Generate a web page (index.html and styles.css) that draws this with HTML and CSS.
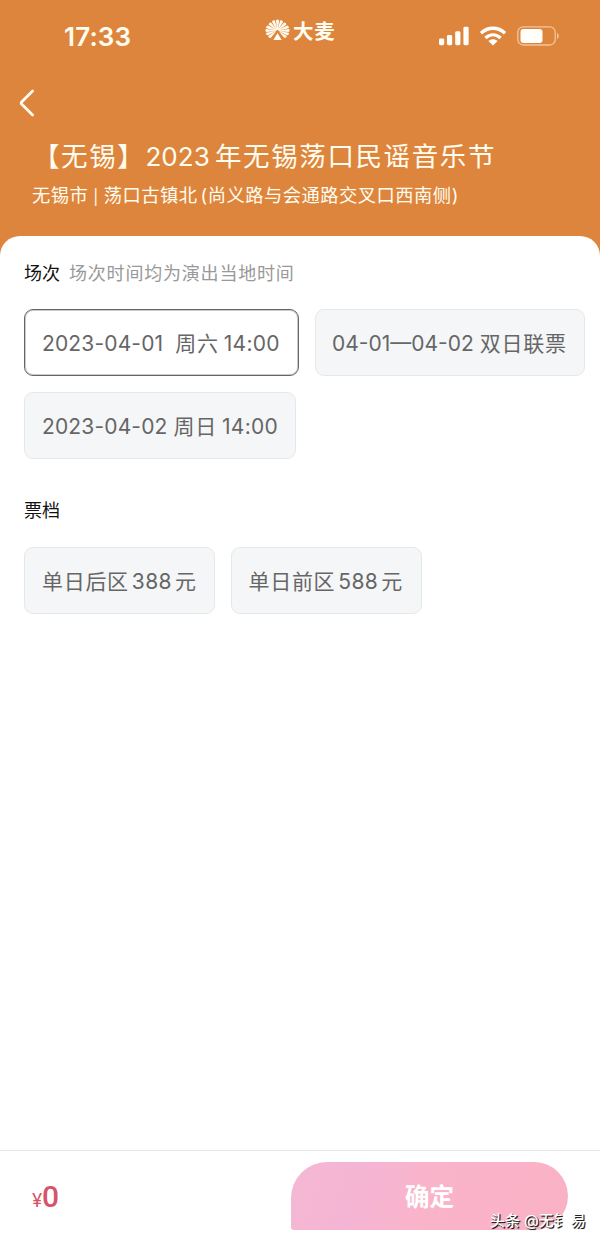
FILE: index.html
```html
<!DOCTYPE html>
<html lang="zh-CN">
<head>
<meta charset="utf-8">
<title>选择场次</title>
<link rel="stylesheet" href="styles.css">
</head>
<body>
<div class="page">
  <header class="hero">
    <div class="status">
      <span class="clock">17:33</span>
      <div class="brand">
        <svg class="flower" viewBox="0 0 26 24">
          <path fill="currentColor" d="M12.7 12 11.3 2.1Q13 .2 14.7 2.1L13.3 12zM12.3 12 7.2 3.5Q8.1 1.1 10.3 2.2L12.8 12zM13.7 12l5.1-8.5Q17.9 1.1 15.7 2.2L13.2 12zM12 12.3 3.8 6.5Q3.8 4 6.3 4.1L12.5 12zM14 12.3l8.2-5.8Q22.2 4 19.7 4.1L13.5 12zM11.8 12.6 1.4 10.2Q.5 8 3.1 7.3L12.2 12.3zM14.2 12.6l10.4-2.4Q25.5 8 22.9 7.3L13.8 12.3zM11.6 13 1.2 14Q-.4 12.2 1.2 11L11.8 12.5zM14.4 13l10.4 1Q26.4 12.2 24.8 11L14.2 12.5zM11.4 13.4 2.8 17.5Q.6 16.9 1.3 14.9L11.5 13zM14.6 13.4l8.6 4.1Q25.4 16.9 24.7 14.9L14.5 13zM10.8 14.3 5.9 20.4Q3.1 20.3 3.4 18.1L11.2 13.5zM15.2 14.3l4.9 6.1Q22.9 20.3 22.6 18.1L14.8 13.5zM13 15l4.3 7.3H8.7z"/>
        </svg>
        <span class="brand-name">大麦</span>
      </div>
      <div class="indicators">
        <svg class="signal" viewBox="0 0 32 20" fill="currentColor"><rect x="0" y="12.5" width="5.4" height="7" rx="1.5"/><rect x="8.2" y="9" width="5.4" height="10.5" rx="1.5"/><rect x="16.7" y="5" width="5.4" height="14.5" rx="1.5"/><rect x="25.2" y="0.5" width="5.4" height="19" rx="1.5"/></svg>
        <svg class="wifi" viewBox="0 0 28 20"><g fill="none" stroke="currentColor" stroke-width="3.4"><path d="M2 7.3C9 .6 19 .6 26 7.3"/><path d="M6.4 12c4.6-4.2 10.6-4.2 15.2 0"/></g><path fill="currentColor" d="M9.4 15c2.7-2.4 6.5-2.4 9.2 0L14 19.6z"/></svg>
        <svg class="battery" viewBox="0 0 43 20"><rect x=".8" y=".8" width="37.4" height="18.2" rx="5.5" fill="none" stroke="#f2c59d" stroke-width="1.3"/><rect x="3.5" y="3.1" width="22" height="13.8" rx="3" fill="currentColor"/><path d="M40 7c2.3.8 2.3 5 0 6z" fill="#f2c59d"/></svg>
      </div>
    </div>
    <svg class="back" viewBox="0 0 16 28"><path d="M13.6 2 2.6 13a1.5 1.5 0 0 0 0 2l11 11" fill="none" stroke="currentColor" stroke-width="2.7" stroke-linecap="round"/></svg>
    <h1 class="title">【无锡】<span class="year">2023</span>年无锡荡口民谣音乐节</h1>
    <p class="venue">无锡市<span class="bar">|</span>荡口古镇北<span class="paren">(</span>尚义路与会通路交叉口西南侧<span>)</span></p>
  </header>
  <main class="sheet">
    <div class="heading"><h2>场次</h2><span class="hint">场次时间均为演出当地时间</span></div>
    <div class="chips">
      <div class="chip selected"><span class="num">2023-04-01</span><span class="wide">周六</span><span class="time">14:00</span></div>
      <div class="chip pass"><span class="num dash">04-01—04-02</span><span class="mid">双日联票</span></div>
      <div class="chip sunday"><span class="num">2023-04-02</span><span class="mid">周日</span><span class="time">14:00</span></div>
    </div>
    <div class="heading tier"><h2>票档</h2></div>
    <div class="chips">
      <div class="chip price"><span>单日后区</span><span class="amount">388</span><span>元</span></div>
      <div class="chip price"><span>单日前区</span><span class="amount">588</span><span>元</span></div>
    </div>
  </main>
  <footer class="footer">
    <div class="total"><span class="yen">¥</span><span class="zero">0</span></div>
    <div class="confirm">确定</div>
    <div class="watermark"><span>头条</span><span class="handle">@无</span><span class="radical">钅</span><span>易</span></div>
  </footer>
</div>
</body>
</html>
```
FILE: styles.css
```css
* { box-sizing: border-box; }
body { margin: 0; background: #fff; font-family: Inter, "Noto Sans CJK SC", sans-serif; }
h1, h2, p { margin: 0; font-weight: 400; }
svg { display: block; flex: none; }
.page { width: 600px; height: 1242px; display: flex; flex-direction: column; overflow: hidden; }
.hero { height: 260px; flex: none; background: #de853d; color: #fffdf0; }
.status { height: 72px; display: flex; align-items: flex-start; }
.clock { width: 265px; padding-left: 64px; margin-top: 21px; font-size: 26px; line-height: 32px; font-weight: 600; letter-spacing: .15px; }
.brand { width: 174px; display: flex; margin-top: 18px; }
.flower { width: 25px; height: 24px; }
.brand-name { margin-left: 3px; margin-top: 1px; font-size: 20.5px; line-height: 25px; font-weight: 700; letter-spacing: .7px; }
.indicators { display: flex; margin-top: 26px; color: #fffefa; }
.signal { width: 31px; height: 20px; }
.wifi { width: 28px; height: 20px; margin-left: 9px; }
.battery { width: 43px; height: 20px; margin-left: 10px; }
.back { width: 16px; height: 28px; margin: 17px 0 0 19px; }
.title { margin: 19px 0 0 33px; height: 40px; line-height: 40px; font-size: 26.5px; letter-spacing: 1.6px; white-space: nowrap; }
.year { font-size: 26px; letter-spacing: .1px; margin-right: 5px; }
.venue { height: 28px; margin: 5px 0 0 32px; line-height: 28px; font-size: 18.3px; letter-spacing: .48px; white-space: nowrap; }
.bar { margin: 0 5px 0 5px; font-size: 15px; }
.paren { margin-left: 3px; }
.sheet { flex: 1; margin-top: -24px; padding: 23px 0 0 24px; background: #fff; border-radius: 20px 20px 0 0; }
.heading { display: flex; height: 30px; align-items: center; }
.heading h2 { font-size: 18px; line-height: 30px; color: #111; }
.hint { margin-left: 9px; font-size: 18px; line-height: 30px; letter-spacing: .8px; color: #999; }
.chips { display: flex; flex-wrap: wrap; gap: 16px; margin-top: 20px; }
.chip { display: flex; align-items: center; height: 67px; padding: 2px 0 0 17px; border: 1px solid #e5e8ea; border-radius: 9px; background: #f5f6f8; color: #666; font-size: 21px; line-height: 30px; letter-spacing: .7px; white-space: nowrap; }
.selected { width: 275px; border-color: #666; background: #fff; box-shadow: inset 0 0 0 1px rgba(102, 102, 102, .35); }
.num { letter-spacing: .15px; }
.time { letter-spacing: .3px; }
.dash { letter-spacing: 0; }
.pass { width: 270px; padding-left: 16px; }
.sunday { width: 272px; }
.price { width: 191px; }
.price + .price { margin-left: -.5px; }
.wide { margin-left: 12px; }
.mid { margin-left: 6px; }
.time { margin-left: 5px; }
.amount { margin: 0 3px; letter-spacing: .4px; }
.tier { margin-top: 37px; }
.tier + .chips { margin-top: 21px; }
.footer { position: relative; height: 92px; flex: none; display: flex; border-top: 1px solid #e6e6e6; background: #fff; }
.total { width: 291px; padding: 27px 0 0 32px; color: #d65368; display: flex; align-items: baseline; line-height: 38px; }
.yen { font-size: 18.5px; letter-spacing: -.3px; }
.zero { font: 500 30px/38px Roboto, sans-serif; }
.confirm { width: 277px; height: 68px; margin-top: 11px; border-radius: 36px 34px 34px 3px; background: linear-gradient(105deg, #f5b8d3 0%, #f4b5d4 25%, #fab4ca 48%, #f9b1c5 100%); color: #fff; font-size: 24.5px; line-height: 71px; font-weight: 700; text-align: center; }
.watermark { position: absolute; left: 490px; top: 58px; display: flex; color: #fff; font-size: 15px; line-height: 23px; font-weight: 500; text-shadow: 1px 1px 0 #222, 1px 1px 1px #444; white-space: nowrap; }
.handle { margin-left: 4px; }
.radical { width: 15px; margin-right: 2px; }
```
